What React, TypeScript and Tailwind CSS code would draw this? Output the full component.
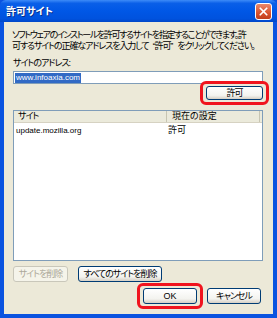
import { X } from 'lucide-react'

const font = "font-['Liberation_Sans','Noto_Sans_CJK_JP',sans-serif] [font-feature-settings:'palt']"

function XpButton({
  label,
  className = '',
  disabled = false,
}: {
  label: string
  className?: string
  disabled?: boolean
}) {
  return (
    <div
      className={`flex items-center justify-center rounded-[3px] border text-[9px] leading-none tracking-[-1px] whitespace-nowrap ${
        disabled
          ? 'border-[#C9C7BA] bg-[#F5F4EA] text-[#ACA899]'
          : 'border-[#003C74] bg-[linear-gradient(#FFFFFF,#F3F3EF_70%,#D6D0C5)] text-black'
      } ${className}`}
    >
      {label}
    </div>
  )
}

// red annotation ring drawn over a button
function Highlight() {
  return (
    <div className="pointer-events-none absolute -inset-x-[6px] -inset-y-[5px] rounded-[6px] border-[3px] border-[#F0141E]" />
  )
}

export default function App() {
  return (
    <div className={`flex h-[318px] w-[277px] flex-col bg-[#0A53E0] ${font}`}>
      {/* Title bar */}
      <div className="flex h-[22px] items-center justify-between rounded-t-[6px] bg-[linear-gradient(#3D8BF8,#0A5FE8_15%,#0057E6_50%,#0052DE_85%,#0047C8)] pl-[6px] pr-[5px]">
        <span className="text-[10px] font-bold text-white [text-shadow:1px_1px_0_#0A2F8A]">
          許可サイト
        </span>
        <div className="flex h-[17px] w-[17px] items-center justify-center rounded-[3px] border border-white bg-[linear-gradient(#E9886C,#D9522E_60%,#C13E1C)]">
          <X className="h-[13px] w-[13px] text-white" strokeWidth={3.2} />
        </div>
      </div>

      {/* Body */}
      <div className="mx-[4px] mb-[4px] flex flex-1 flex-col bg-[#ECE9D8] pl-[8px] pr-[10px] text-black">
        <div className="pt-[8px] text-[9px] leading-[11px] whitespace-nowrap">
          <div className="tracking-[-1.35px]">ソフトウェアのインストールを許可するサイトを指定することができます。許</div>
          <div className="tracking-[-1.1px]">
            可するサイトの正確なアドレスを入力して
            <span className="ml-[4px]">“</span>許可<span className="mr-[5px]">”</span>
            をクリックしてください。
          </div>
        </div>

        <div className="mt-[6px] ml-[1px] h-[11px] text-[9px] leading-[11px] tracking-[-1px]">サイトのアドレス:</div>

        <div className="mt-[2px] ml-[1px] flex h-[13px] items-center border border-[#7F9DB9] bg-white pl-[1px]">
          <span className="bg-[#316AC5] px-[1px] text-[8px] leading-[10px] text-white">www.infoaxia.com</span>
        </div>

        <div className="mt-[2px] flex justify-end">
          <div className="relative">
            <XpButton label="許可" className="h-[14px] w-[57px]" />
            <Highlight />
          </div>
        </div>

        {/* Site list */}
        <div className="mt-[10px] ml-[1px] flex h-[151px] flex-col border border-[#7F9DB9] bg-white">
          <div className="flex h-[12px] border-b border-[#D6D2C2] bg-[#EBEADB] text-[9px] leading-[11px]">
            <div className="w-[153px] border-r border-[#C7C5B2] pl-[4px] tracking-[-1px]">サイト</div>
            <div className="w-[93px] border-r border-[#C7C5B2] pl-[5px]">現在の設定</div>
          </div>
          <div className="mt-[2px] flex h-[12px] items-center">
            <div className="w-[153px] pl-[2px] text-[8px]">update.mozilla.org</div>
            <div className="pl-[1px] text-[9px]">許可</div>
          </div>
        </div>

        <div className="mt-[5px] ml-[1px] flex gap-[10px]">
          <XpButton label="サイトを削除" disabled className="h-[16px] w-[55px]" />
          <XpButton label="すべてのサイトを削除" className="h-[16px] w-[84px]" />
        </div>

        <div className="mt-[6px] mr-[2px] flex justify-end gap-[10px]">
          <div className="relative">
            <XpButton label="OK" className="h-[16px] w-[54px] tracking-normal" />
            <Highlight />
          </div>
          <XpButton label="キャンセル" className="h-[16px] w-[54px]" />
        </div>
      </div>
    </div>
  )
}
